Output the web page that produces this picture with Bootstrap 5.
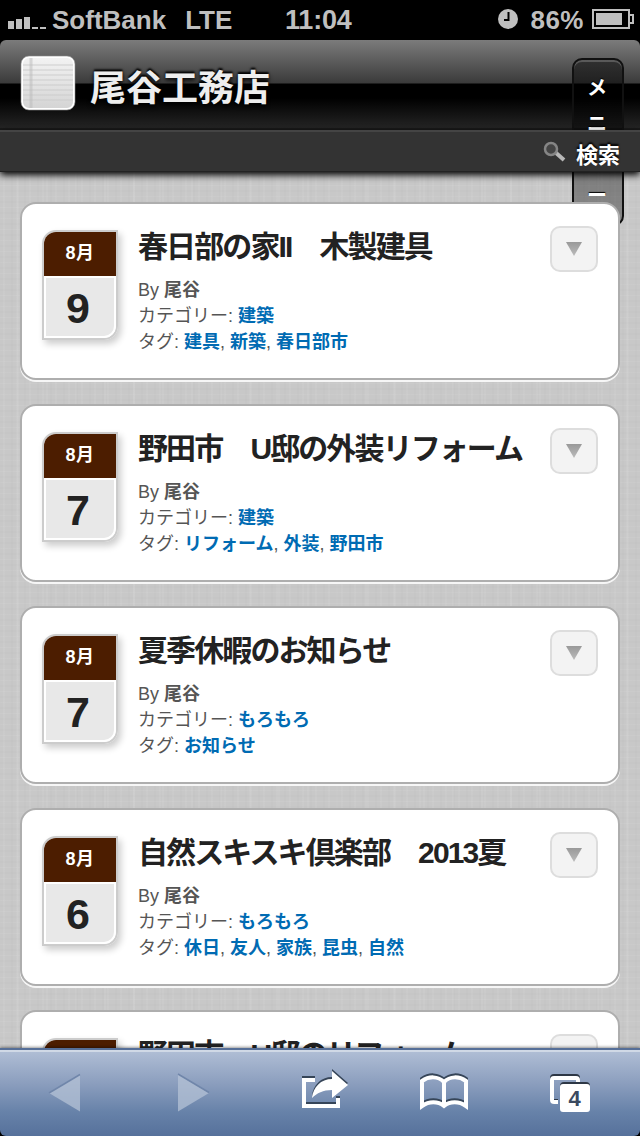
<!DOCTYPE html>
<html lang="ja">
<head>
<meta charset="utf-8">
<meta name="viewport" content="width=device-width, initial-scale=1">
<title>尾谷工務店</title>
<link href="https://cdn.jsdelivr.net/npm/bootstrap@5.3.0/dist/css/bootstrap.min.css" rel="stylesheet">
<style>
html,body{height:100%}
body{font-family:"Liberation Sans","Noto Sans CJK JP",sans-serif;background:#000;color:#222;overflow:hidden}
svg{display:block;flex:none}
a{text-decoration:none}
.screen{width:640px;height:1136px;overflow:hidden}
.status{height:40px;color:#bfbfbf;font-weight:700;font-size:26px;line-height:40px;background:#000;display:grid;grid-template-columns:277px auto 1fr;padding:0 6px 0 8px}
.clock{font-size:27px;letter-spacing:-.2px}
.site-head{height:90px;flex:none;padding:0 20px;border-radius:6px 6px 0 0;background:linear-gradient(#7b7b7b 0,#3b3b3b 43px,#000 44px,#000 58px,#242424 88px,#191919 88px)}
.site-title{font-size:36px;line-height:54px;color:#eee;text-shadow:0 -2px 2px #000,0 2px 4px #000;margin:22px 0 0 14px;font-weight:700}
.site-icon{margin-top:15px}
.menu-tab{position:absolute;z-index:1;left:572px;top:18px;width:52px;height:168px;border:2px solid #111;border-radius:10px;background:linear-gradient(rgba(0,0,0,.48),rgba(0,0,0,.32));box-shadow:inset 0 2px 0 rgba(255,255,255,.2);color:#fff;font-weight:700;font-size:20px;line-height:36px;padding:10px 17px 0 13px;text-shadow:0 -1px 1px #000}
.search-bar{height:42px;flex:none;background:#333;border-top:2px solid #444;box-shadow:0 3px 7px #000;border-bottom:1px solid #222;z-index:3;color:#fff;font-weight:700;font-size:22px;padding:7px 20px 0;text-shadow:0 -2px 2px #000}
.linen{flex:1;min-height:0;overflow:hidden;background:
 repeating-linear-gradient(90deg,transparent 0 3px,rgba(255,255,255,.05) 3px 5px,transparent 5px 11px,rgba(0,0,0,.01) 11px 13px),
 repeating-linear-gradient(0deg,transparent 0 4px,rgba(255,255,255,.05) 4px 5px,transparent 5px 9px,rgba(0,0,0,.012) 9px 11px),
 repeating-linear-gradient(90deg,transparent 0 17px,rgba(255,255,255,.06) 17px 19px,transparent 19px 29px),#c8c8c8}
.posts{padding:30px 20px 0;gap:24px}
.post{height:178px;flex:none;border:2px solid #aeaeae;border-radius:16px;background:#fff;box-shadow:0 2px 0 #f6f6f6;padding:22px 20px 0;z-index:2}
.cal{width:76px;height:110px;margin-top:4px;flex:none;border:2px solid #ccc;border-radius:14px 0 14px 0;box-shadow:3px 4px 7px rgba(0,0,0,.2);overflow:hidden}
.cal-month{height:44px;line-height:43px;background:#4c1d00;color:#fff;font-size:18px;font-weight:700;letter-spacing:.5px}
.cal-day{height:62px;line-height:60px;font-size:43px;font-weight:700;background:#e8e8e8;border:2px solid #fff;border-radius:0 0 12px 0;padding-right:4px}
.post-body{margin-left:20px}
.post-title{font-size:30px;line-height:38px;letter-spacing:-1.9px;font-weight:700;margin:2px 0 11px;white-space:nowrap}
.meta{font-size:18px;line-height:26px;color:#555}
.meta a{color:#006bb3;font-weight:700}
.fold{width:48px;height:46px;flex:none;border:2px solid #ddd;border-radius:10px;background:#f3f3f3}
.tools{height:88px;flex:none;z-index:4;background:linear-gradient(#b1bfd6,#8a9dbd 40%,#6782a9 72%,#56719b);border-top:2px solid #566f98;box-shadow:inset 0 2px 0 #d0d9e6,0 -1px 3px rgba(0,0,0,.4);border-radius:0 0 6px 6px}
.tools .cell{width:128px;flex:none}
</style>
</head>
<body>
<svg width="0" height="0" class="position-absolute"><defs><linearGradient id="tri" x2="0" y2="1"><stop stop-color="#999"/><stop offset="1" stop-color="#bbb"/></linearGradient></defs></svg>
<div class="screen d-flex flex-column">
  <div class="status flex-shrink-0">
    <div class="d-flex align-items-center">
      <svg width="38" height="40" fill="#bfbfbf"><path d="M0 21h6v8H0zM8 19h6v10H8zM16 17h6v12h-6zM24 27h6v2h-6zM32 27h6v2h-6z"/></svg>
      <span style="margin-left:6px">SoftBank</span><span style="margin-left:19px">LTE</span>
    </div>
    <div class="clock">11:04</div>
    <div class="d-flex align-items-center justify-content-end">
      <svg width="20" height="40"><circle cx="10" cy="19" r="10" fill="#bfbfbf"/><path d="M10.5 12v8H6" fill="none" stroke="#000" stroke-width="2"/></svg>
      <span style="margin:0 8px 0 12px;letter-spacing:.5px">86%</span>
      <svg width="42" height="40"><path d="M1 10h36v18H1zM38 15h3v8h-3" fill="none" stroke="#bfbfbf" stroke-width="2"/><path d="M4 13h26v12H4z" fill="#bfbfbf"/></svg>
    </div>
  </div>
  <div class="position-relative d-flex flex-column flex-grow-1" style="min-height:0">
    <header class="site-head d-flex align-items-start">
      <svg class="site-icon" width="56" height="56" viewBox="0 0 56 56">
        <defs><linearGradient id="pg" x2="0" y2="1"><stop stop-color="#f3f3f3"/><stop offset="1" stop-color="#d4d4d4"/></linearGradient></defs>
        <rect x="2" y="2" width="52" height="52" rx="7" fill="url(#pg)" stroke="#fff" stroke-width="2"/>
        <path d="M3 10h50M3 15h50M3 20h50M3 25h50M3 30h50M3 35h50M3 40h50M3 45h50" stroke="#ccc" stroke-width="1.5" opacity=".6"/>
        <path d="M11 3v50" stroke="#bbb" stroke-width="3" opacity=".5"/>
        <rect x="1" y="1" width="54" height="54" rx="8" fill="none" stroke="#888" opacity=".6"/>
      </svg>
      <h1 class="site-title">尾谷工務店</h1>
    </header>
    <div class="menu-tab">メニュー</div>
    <div class="search-bar position-relative d-flex align-items-center justify-content-end">
      <svg width="24" height="24" viewBox="0 0 24 24" style="margin:-7px 10px 0 0"><path d="m13 12 9 8" stroke="#b8b8b8" stroke-width="4"/><circle cx="9" cy="9" r="6" fill="#444" stroke="#858585" stroke-width="2.500"/></svg>
      <span>検索</span>
    </div>
    <main class="linen">
      <div class="posts d-flex flex-column">
        <article class="post position-relative d-flex">
          <div class="cal text-center"><div class="cal-month">8月</div><div class="cal-day">9</div></div>
          <div class="post-body flex-grow-1"><h2 class="post-title">春日部の家II　木製建具</h2><div class="meta">By <b>尾谷</b><br>カテゴリー: <a href="#">建築</a><br>タグ: <a href="#">建具</a>, <a href="#">新築</a>, <a href="#">春日部市</a></div></div>
          <div class="fold d-flex align-items-center justify-content-center"><svg width="18" height="14"><path d="M1 0h16L9 14z" fill="url(#tri)"/></svg></div>
        </article>
        <article class="post position-relative d-flex">
          <div class="cal text-center"><div class="cal-month">8月</div><div class="cal-day">7</div></div>
          <div class="post-body flex-grow-1"><h2 class="post-title">野田市　U邸の外装リフォーム</h2><div class="meta">By <b>尾谷</b><br>カテゴリー: <a href="#">建築</a><br>タグ: <a href="#">リフォーム</a>, <a href="#">外装</a>, <a href="#">野田市</a></div></div>
          <div class="fold d-flex align-items-center justify-content-center"><svg width="18" height="14"><path d="M1 0h16L9 14z" fill="url(#tri)"/></svg></div>
        </article>
        <article class="post position-relative d-flex">
          <div class="cal text-center"><div class="cal-month">8月</div><div class="cal-day">7</div></div>
          <div class="post-body flex-grow-1"><h2 class="post-title">夏季休暇のお知らせ</h2><div class="meta">By <b>尾谷</b><br>カテゴリー: <a href="#">もろもろ</a><br>タグ: <a href="#">お知らせ</a></div></div>
          <div class="fold d-flex align-items-center justify-content-center"><svg width="18" height="14"><path d="M1 0h16L9 14z" fill="url(#tri)"/></svg></div>
        </article>
        <article class="post position-relative d-flex">
          <div class="cal text-center"><div class="cal-month">8月</div><div class="cal-day">6</div></div>
          <div class="post-body flex-grow-1"><h2 class="post-title">自然スキスキ倶楽部　2013夏</h2><div class="meta">By <b>尾谷</b><br>カテゴリー: <a href="#">もろもろ</a><br>タグ: <a href="#">休日</a>, <a href="#">友人</a>, <a href="#">家族</a>, <a href="#">昆虫</a>, <a href="#">自然</a></div></div>
          <div class="fold d-flex align-items-center justify-content-center"><svg width="18" height="14"><path d="M1 0h16L9 14z" fill="url(#tri)"/></svg></div>
        </article>
        <article class="post position-relative d-flex">
          <div class="cal text-center"><div class="cal-month"></div></div>
          <div class="post-body flex-grow-1"><h2 class="post-title">野田市　U邸のリフォーム</h2></div>
          <div class="fold"></div>
        </article>
      </div>
    </main>
    <nav class="tools position-relative d-flex">
      <div class="cell"><svg width="128" height="86"><path d="M80 24.500v37L49 43z" fill="#b4c2d6" opacity=".75"/><path d="M49 43 80 24.500" stroke="#7086aa" stroke-width="1.500"/></svg></div>
      <div class="cell"><svg width="128" height="86"><path d="M50 24.500v37L81 43z" fill="#b4c2d6" opacity=".75"/><path d="M50 24 81 42.500" stroke="#7086aa" stroke-width="1.500"/></svg></div>
      <div class="cell"><svg width="128" height="86">
        <defs><g id="share"><path d="M59 30H48v26h34V48" fill="none" stroke-width="4"/><path d="M76 21 92 35 76 48v-8c-9 0-15 3-20 8 1-11 9-19 20-19z" stroke="none"/></g></defs>
        <use href="#share" y="-2" fill="#364558" stroke="#364558"/><use href="#share" fill="#fff" stroke="#fff"/></svg></div>
      <div class="cell"><svg width="128" height="86">
        <defs><path id="book" d="M38 56V31c7-5 16-5 22 1 6-6 15-6 22-1v25c-7-5-16-5-22 0-6-5-15-5-22 0zM60 32v24" fill="none" stroke-width="4"/></defs>
        <use href="#book" y="-2" stroke="#364558"/><use href="#book" stroke="#fff"/></svg></div>
      <div class="cell"><svg width="128" height="86">
        <path d="M46 52h-4a4 4 0 0 1-2-3V28q0-2 2-2h22q2 0 2 2v4" fill="none" stroke="#2d3745" stroke-width="4"/>
        <path d="M42 49h4v3h-4z" fill="#2d3745"/>
        <path d="M46 52h-4q-2 0-2-2V30q0-2 2-2h22q2 0 2 2v2" fill="none" stroke="#fff" stroke-width="4"/>
        <rect x="48" y="32" width="30" height="29" rx="4" fill="#2d3745"/><rect x="48" y="34" width="30" height="28" rx="3" fill="#fff"/>
        <text x="62.500" y="56" text-anchor="middle" font-family="Liberation Sans, sans-serif" font-weight="700" font-size="22" fill="#3b4a60">4</text></svg></div>
    </nav>
  </div>
</div>
<script src="https://cdn.jsdelivr.net/npm/bootstrap@5.3.0/dist/js/bootstrap.bundle.min.js"></script>
</body>
</html>
